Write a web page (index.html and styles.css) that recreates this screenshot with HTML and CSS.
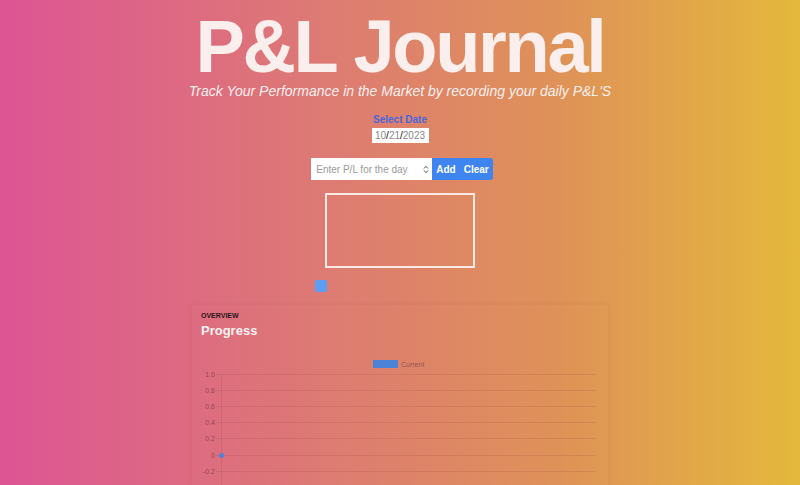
FILE: index.html
```html
<!DOCTYPE html>
<html lang="en">
<head>
<meta charset="utf-8">
<title>P&amp;L Journal</title>
<link rel="stylesheet" href="styles.css">
</head>
<body>
<main class="page">
  <header class="hero">
    <h1 class="title">P&amp;L Journal</h1>
    <p class="tagline">Track Your Performance in the Market by recording your daily P&amp;L'S</p>
  </header>

  <section class="date-picker">
    <label class="date-label">Select Date</label>
    <div class="date-input"><span class="seg">10</span><span class="slash">/</span><span class="seg">21</span><span class="slash">/</span><span class="seg">2023</span></div>
  </section>

  <form class="entry">
    <div class="num-input">
      <span class="placeholder">Enter P/L for the day</span>
      <svg class="spinner" width="6" height="9" viewBox="0 0 6 9"><path d="M1 3.5 L3 1.3 L5 3.5 M1 5.5 L3 7.7 L5 5.5" fill="none" stroke="#555" stroke-width="1"/></svg>
    </div>
    <button type="button" class="btn">Add</button>
    <button type="button" class="btn btn-last">Clear</button>
  </form>

  <div class="result-box"></div>

  <div class="toggle-row"><span class="toggle"></span></div>

  <section class="card">
    <div class="eyebrow">OVERVIEW</div>
    <h2 class="card-title">Progress</h2>
    <svg class="chart" width="416" height="200" viewBox="0 0 416 200">
      <rect x="181" y="21" width="25" height="8" fill="#4d83d6"/>
      <text x="209" y="28" class="legend">Current</text>
      <g stroke="rgba(120,50,40,0.13)" stroke-width="1">
        <line x1="24" y1="35.5" x2="404" y2="35.5"/>
        <line x1="24" y1="51.5" x2="404" y2="51.5"/>
        <line x1="24" y1="67.5" x2="404" y2="67.5"/>
        <line x1="24" y1="83.5" x2="404" y2="83.5"/>
        <line x1="24" y1="99.5" x2="404" y2="99.5"/>
        <line x1="24" y1="116.5" x2="404" y2="116.5"/>
        <line x1="24" y1="132.5" x2="404" y2="132.5"/>
        <line x1="24" y1="148.5" x2="404" y2="148.5"/>
        <line x1="29.5" y1="35" x2="29.5" y2="200"/>
      </g>
      <g class="axis">
        <text x="23" y="38">1.0</text>
        <text x="23" y="54">0.8</text>
        <text x="23" y="70">0.6</text>
        <text x="23" y="86">0.4</text>
        <text x="23" y="102">0.2</text>
        <text x="23" y="119">0</text>
        <text x="23" y="135">-0.2</text>
      </g>
      <circle cx="29.5" cy="116.5" r="2.5" fill="#4d83d6"/>
    </svg>
  </section>
</main>
</body>
</html>
```

FILE: styles.css
```css
* { box-sizing: border-box; }

html, body {
  margin: 0;
  padding: 0;
  height: 100%;
}

body {
  font-family: "Liberation Sans", Arial, sans-serif;
  background: linear-gradient(90deg, #dd5594 0%, #dd7a74 40%, #df9258 70%, #e4b83c 100%);
  overflow: hidden;
}

.page {
  display: flex;
  flex-direction: column;
  align-items: center;
}

.hero {
  display: flex;
  flex-direction: column;
  align-items: center;
  padding-top: 14px;
}

.title {
  margin: 0;
  font-size: 74px;
  line-height: 66px;
  font-weight: 700;
  letter-spacing: -2.3px;
  color: #fbefed;
}

.tagline {
  margin: 3px 0 0;
  font-size: 14px;
  line-height: 17px;
  font-style: italic;
  color: #fbefed;
}

.date-picker {
  display: flex;
  flex-direction: column;
  align-items: center;
  margin-top: 14px;
}

.date-label {
  font-size: 10px;
  line-height: 12px;
  font-weight: 700;
  color: #4a66dc;
}

.date-input {
  margin-top: 2px;
  width: 57px;
  height: 15px;
  background: #fff;
  display: flex;
  align-items: center;
  justify-content: center;
  font-size: 10px;
  color: #8a8a8a;
}

.date-input .slash { color: #111; }

.entry {
  display: flex;
  margin: 15px 0 0 4px;
  height: 22px;
}

.num-input {
  width: 121px;
  height: 22px;
  background: #fff;
  display: flex;
  align-items: center;
  justify-content: space-between;
  padding: 0 3px 0 5px;
  font-size: 10px;
  color: #9a9a9a;
}

.btn {
  border: none;
  margin: 0;
  padding: 0 4px;
  height: 22px;
  background: #3f85ef;
  color: #fff;
  font-family: "Liberation Sans", Arial, sans-serif;
  font-size: 10px;
  font-weight: 700;
}

.btn-last {
  border-radius: 0 3px 3px 0;
}

.result-box {
  margin-top: 13px;
  width: 150px;
  height: 75px;
  border: 2px solid #fbe9e4;
}

.toggle-row {
  width: 170px;
  display: flex;
  margin-top: 12px;
}

.toggle {
  width: 12px;
  height: 12px;
  border-radius: 2px;
  background: #5e9ef2;
}

.card {
  margin-top: 13px;
  width: 416px;
  height: 300px;
  padding: 6px 0 0;
  box-shadow: 0 0 6px rgba(120, 40, 40, 0.08);
}

.eyebrow {
  margin-left: 9px;
  font-size: 7px;
  line-height: 9px;
  font-weight: 700;
  color: #2a161b;
}

.card-title {
  margin: 3px 0 0 9px;
  font-size: 13px;
  line-height: 16px;
  font-weight: 700;
  color: #fdf2f0;
}

.chart {
  display: block;
}

.chart text {
  font-family: "Liberation Sans", Arial, sans-serif;
  font-size: 7px;
  fill: rgba(80, 40, 40, 0.55);
}

.chart .axis text {
  text-anchor: end;
}
```
